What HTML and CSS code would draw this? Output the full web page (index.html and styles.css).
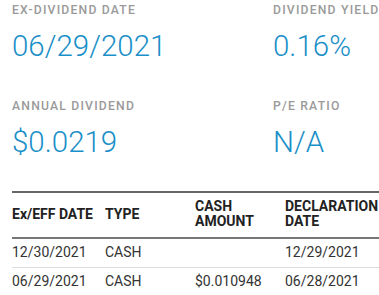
FILE: index.html
```html
<!DOCTYPE html>
<html>
<head>
<meta charset="utf-8">
<link rel="stylesheet" href="styles.css">
</head>
<body>
<div class="page">
  <div class="stats">
    <div class="stat">
      <div class="label">EX-DIVIDEND DATE</div>
      <div class="value">06/29/2021</div>
    </div>
    <div class="stat">
      <div class="label">DIVIDEND YIELD</div>
      <div class="value">0.16%</div>
    </div>
    <div class="stat">
      <div class="label">ANNUAL DIVIDEND</div>
      <div class="value">$0.0219</div>
    </div>
    <div class="stat">
      <div class="label">P/E RATIO</div>
      <div class="value">N/A</div>
    </div>
  </div>
  <table class="divs">
    <thead>
      <tr>
        <th class="c1">Ex/EFF DATE</th>
        <th class="c2">TYPE</th>
        <th class="c3">CASH<br>AMOUNT</th>
        <th class="c4">DECLARATION<br>DATE</th>
      </tr>
    </thead>
    <tbody>
      <tr>
        <td>12/30/2021</td>
        <td>CASH</td>
        <td></td>
        <td>12/29/2021</td>
      </tr>
      <tr>
        <td>06/29/2021</td>
        <td>CASH</td>
        <td>$0.010948</td>
        <td>06/28/2021</td>
      </tr>
    </tbody>
  </table>
</div>
</body>
</html>
```

FILE: styles.css
```css
html, body {
  margin: 0;
  padding: 0;
  background: #fff;
  overflow: hidden;
}
body {
  font-family: Roboto, "Liberation Sans", sans-serif;
  color: #333;
}
.page {
  padding: 2px 0 0 12px;
}
.stats {
  display: grid;
  grid-template-columns: 261px 1fr;
  row-gap: 34px;
}
.label {
  font-size: 12.2px;
  font-weight: 500;
  letter-spacing: 1.2px;
  color: #9a9a9a;
  line-height: 16px;
  white-space: nowrap;
}
.value {
  font-family: "Roboto Light", Roboto, sans-serif;
  font-size: 29.5px;
  font-weight: 300;
  color: #1a8fc8;
  line-height: 36px;
  margin-top: 10px;
  white-space: nowrap;
}
.divs {
  margin-top: 31px;
  width: 380px;
  border-collapse: collapse;
  table-layout: fixed;
}
.divs th {
  text-align: left;
  vertical-align: middle;
  font-size: 14px;
  font-weight: 700;
  line-height: 15px;
  color: #222;
  padding: 6px 0 8px;
  border-top: 2px solid #666;
  border-bottom: 2px solid #777;
}
.divs .c1 { width: 93px; }
.divs .c2 { width: 90px; }
.divs .c3 { width: 90px; }
.divs td {
  font-size: 14px;
  color: #333;
  padding: 6px 0 7px;
  line-height: 15px;
  border-bottom: 1px solid #ddd;
}
.divs tbody tr:last-child td {
  border-bottom: none;
}
```
